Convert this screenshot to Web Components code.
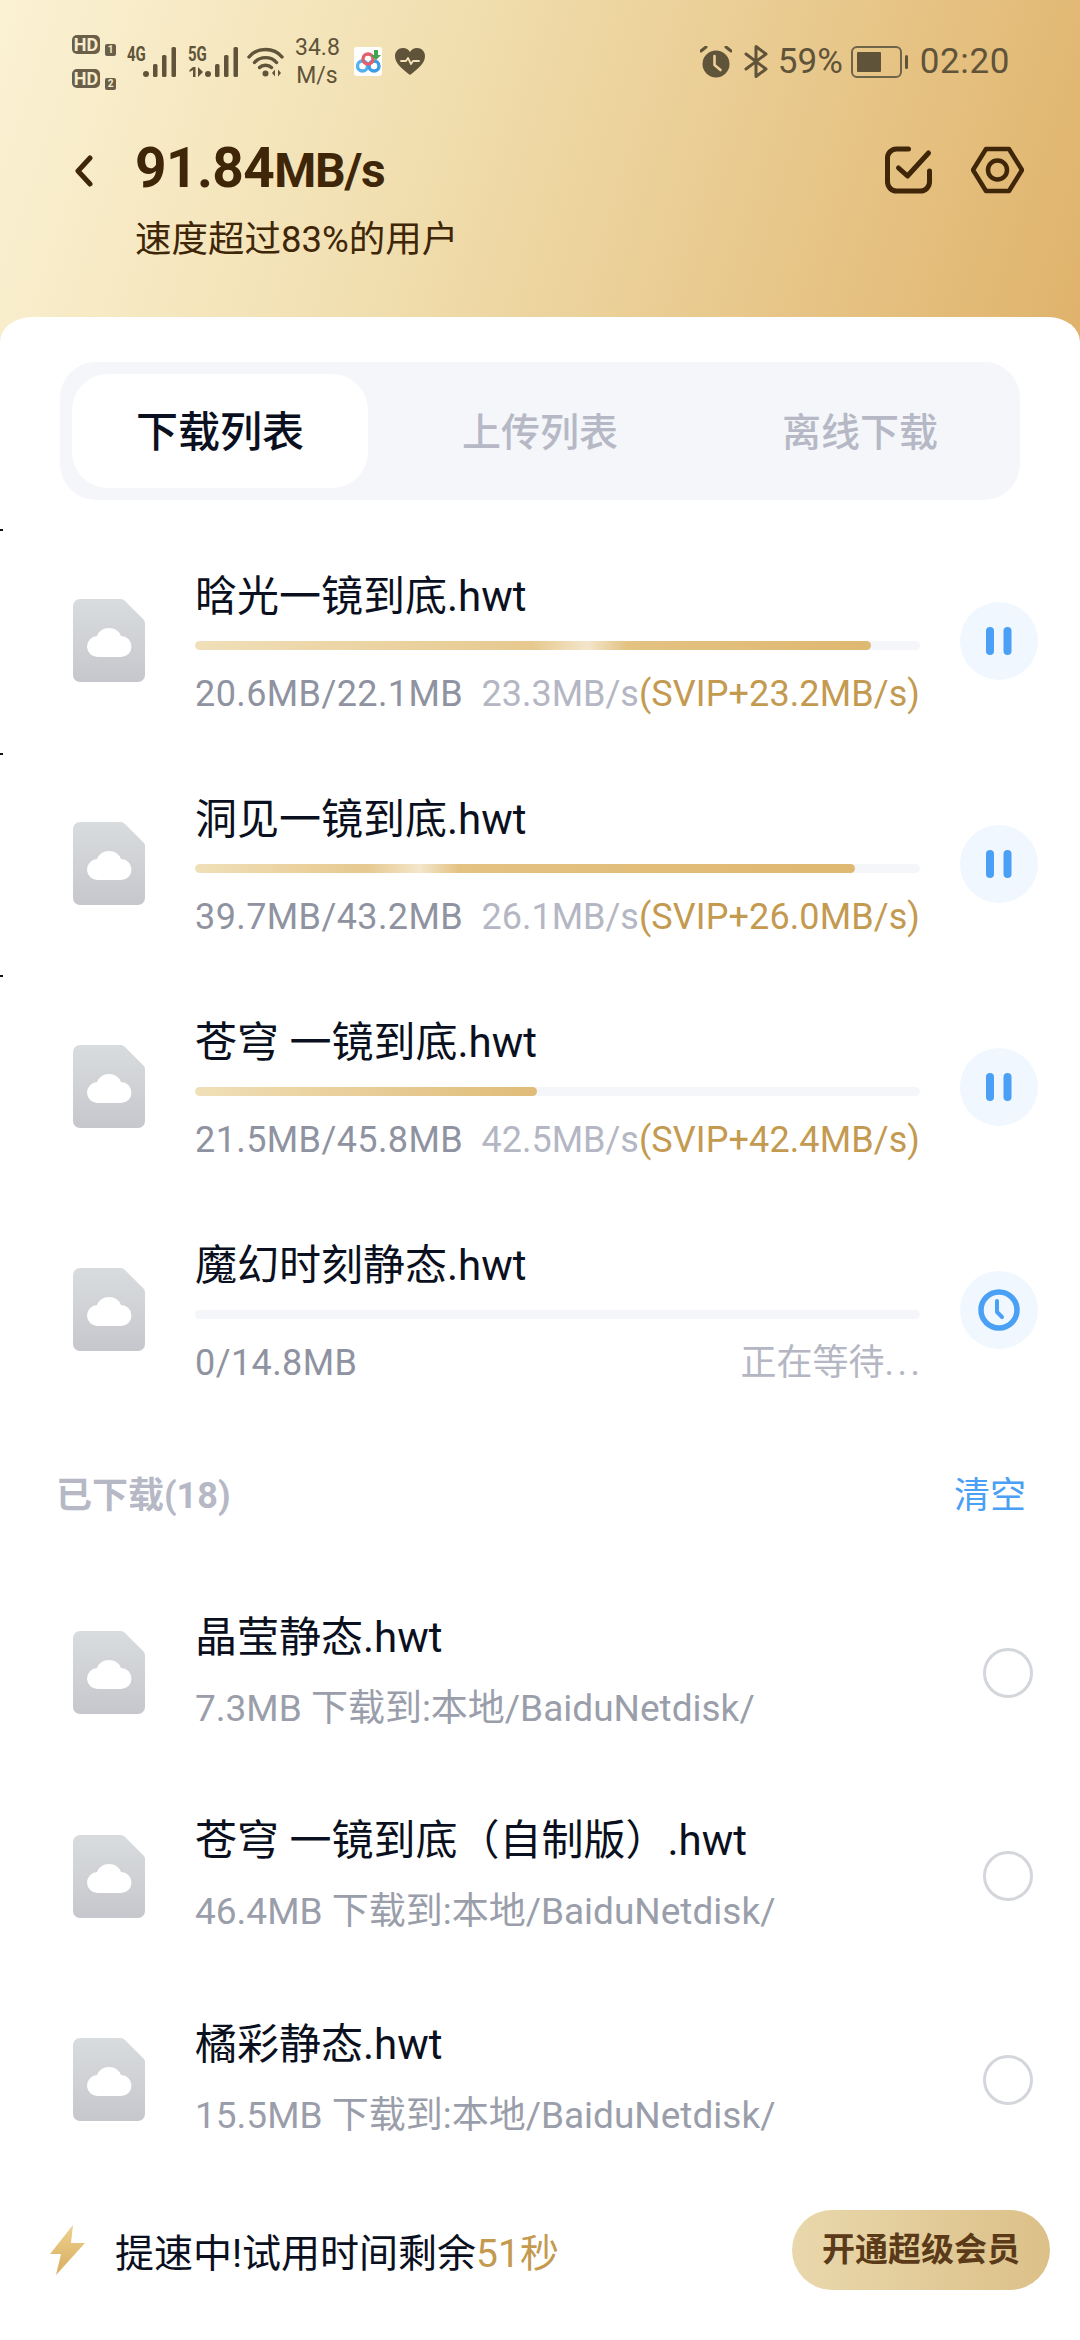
<!DOCTYPE html>
<html lang="zh">
<head>
<meta charset="utf-8">
<title>传输列表</title>
<style>
  html, body { margin: 0; padding: 0; background: #fff; }
  body { font-family: 'Roboto', 'Noto Sans CJK SC', sans-serif; }
</style>
</head>
<body>
<transfer-app>
  <status-bar slot="status"></status-bar>
  <speed-header slot="header" speed="91.84" note="速度超过83%的用户"></speed-header>
  <tab-bar>
    <tab-item active>下载列表</tab-item>
    <tab-item style="width:344px">上传列表</tab-item>
    <tab-item style="width:296px">离线下载</tab-item>
  </tab-bar>
  <transfer-row percent="93.2" shine="58" size="20.6MB/22.1MB" speed="23.3MB/s" boost="(SVIP+23.2MB/s)">晗光一镜到底.hwt</transfer-row>
  <transfer-row percent="91.1" shine="34" size="39.7MB/43.2MB" speed="26.1MB/s" boost="(SVIP+26.0MB/s)">洞见一镜到底.hwt</transfer-row>
  <transfer-row percent="47.2" size="21.5MB/45.8MB" speed="42.5MB/s" boost="(SVIP+42.4MB/s)">苍穹 一镜到底.hwt</transfer-row>
  <transfer-row percent="0" waiting size="0/14.8MB" speed="正在等待<i>...</i>">魔幻时刻静态.hwt</transfer-row>
  <section-head label="已下载(18)" action="清空"></section-head>
  <done-row info="7.3MB 下载到:本地/BaiduNetdisk/">晶莹静态.hwt</done-row>
  <done-row info="46.4MB 下载到:本地/BaiduNetdisk/">苍穹 一镜到底（自制版）.hwt</done-row>
  <done-row info="15.5MB 下载到:本地/BaiduNetdisk/">橘彩静态.hwt</done-row>
  <trial-bar seconds="51秒" cta="开通超级会员">提速中!试用时间剩余</trial-bar>
</transfer-app>

<script>
const FONT = "'Roboto', 'Noto Sans CJK SC', sans-serif";

class TransferApp extends HTMLElement {
  constructor() {
    super();
    this.attachShadow({ mode: 'open' }).innerHTML = `
      <style>
        :host {
          display: block;
          position: relative;
          width: 1080px;
          height: 2340px;
          overflow: hidden;
          font-family: ${FONT};
          background: linear-gradient(108deg, #fbf2d4 0%, #f1dfb0 38%, #e8c88c 70%, #dfb26a 100%) top / 100% 360px no-repeat, #fff;
        }
        .top { height: 317px; box-sizing: border-box; padding-top: 35px; }
        .sheet {
          background: #fff;
          border-radius: 32px 32px 0 0 / 25px 25px 0 0;
          height: 2023px;
          box-sizing: border-box;
          padding-top: 45px;
        }
        .tick { position: absolute; left: 0; width: 3px; height: 2px; background: #111; }
      </style>
      <div class="top">
        <slot name="status"></slot>
        <slot name="header"></slot>
      </div>
      <div class="sheet"><slot></slot></div>
      <i class="tick" style="top:529px"></i>
      <i class="tick" style="top:753px"></i>
      <i class="tick" style="top:975px"></i>
    `;
  }
}

class StatusBar extends HTMLElement {
  constructor() {
    super();
    this.attachShadow({ mode: 'open' }).innerHTML = `
      <style>
        :host {
          display: flex;
          align-items: center;
          height: 53px;
          padding: 0 70px 0 72px;
          color: #5f5339;
          font-family: ${FONT};
        }
        svg { display: block; flex: none; }
        .sims { display: grid; grid-template-columns: 28px 11px; gap: 15px 5px; width: 44px; }
        .hd {
          height: 19px;
          background: #6a5f48;
          color: #f7eccb;
          border-radius: 5px;
          font: 700 18px/19px ${FONT};
          text-align: center;
        }
        .sim {
          align-self: start;
          height: 12px;
          margin: 9px 0 -2px;
          background: #6a5f48;
          color: #f7eccb;
          border-radius: 2px;
          font: 700 10px/12px ${FONT};
          text-align: center;
        }
        .net { position: relative; height: 30px; flex: none; }
        .net b { position: absolute; left: 0; top: 0; font: 700 20px/14px ${FONT}; transform: scaleX(.75); transform-origin: left; }
        .net svg { position: absolute; left: 0; top: 0; }
        .rate { width: 44px; margin-left: 11px; text-align: center; font-size: 23px; line-height: 28px; white-space: nowrap; }
        .spacer { flex: 1; }
        .pct, .clock { font-size: 35px; line-height: 40px; }
        .clock { letter-spacing: .6px; }
      </style>
      <div class="sims">
        <span class="hd">HD</span><span class="sim">1</span>
        <span class="hd">HD</span><span class="sim">2</span>
      </div>
      <div class="net" style="width:49px;margin-left:11px">
        <b>4G</b>
        <svg width="49" height="30" viewBox="0 0 49 30" fill="#5f5339">
          <circle cx="19" cy="27" r="3"/>
          <rect x="26" y="17" width="4.500" height="13" rx="1.500"/>
          <rect x="35" y="8" width="4.500" height="22" rx="1.500"/>
          <rect x="44.500" y="0" width="4.500" height="30" rx="1.500"/>
        </svg>
      </div>
      <div class="net" style="width:50px;margin-left:12px">
        <b>5G</b>
        <svg width="50" height="30" viewBox="0 0 50 30" fill="#5f5339">
          <path d="M5 20h2.500v10H5v-7l-3.500 2v-2zM10 20l5 5-5 5z"/>
          <circle cx="20" cy="27" r="3"/>
          <rect x="27" y="17" width="4.500" height="13" rx="1.500"/>
          <rect x="36" y="8" width="4.500" height="22" rx="1.500"/>
          <rect x="45.500" y="0" width="4.500" height="30" rx="1.500"/>
        </svg>
      </div>
      <svg style="margin-left:9px" width="37" height="30" viewBox="0 0 37 30" fill="none" stroke="#5f5339" stroke-width="3.400" stroke-linecap="round">
        <path d="M2 10C10 0 27 0 35 10"/>
        <path d="M7.500 15.500C13 9 24 9 29.500 15.500"/>
        <path d="M12.500 20.500c3-3 9-3 12 0"/>
        <circle cx="18.500" cy="26.500" r="3" fill="#5f5339" stroke="none"/>
        <path d="M28 22.500l-3 3.500 3 3.500zM31 22.500l3 3.500-3 3.500z" fill="#5f5339" stroke="none"/>
      </svg>
      <div class="rate">34.8<br>M/s</div>
      <svg style="margin-left:15px;border-radius:3px" width="28" height="29" viewBox="0 0 28 29">
        <rect width="28" height="29" fill="#fff"/>
        <g fill="none" stroke-width="3.400">
          <circle cx="8.500" cy="19" r="5" stroke="#56b0ee"/>
          <circle cx="20" cy="19" r="5" stroke="#3f9be6"/>
          <circle cx="14" cy="12" r="5" stroke="#e0606e"/>
        </g>
        <path d="M20 3h4v5h3l-5 5-5-5h3z" fill="#3fa64f"/>
      </svg>
      <svg style="margin-left:13px" width="30" height="27" viewBox="0 0 30 27">
        <path d="M15 27C6 20 0 15 0 8 0 3.500 3.500 0 8 0c3 0 5.500 1.500 7 4 1.500-2.500 4-4 7-4 4.500 0 8 3.500 8 8 0 7-6 12-15 19z" fill="#5f5339"/>
        <path d="M6 13h5l2-3 3 6 2-3h6" fill="none" stroke="#f4e3b8" stroke-width="1.800" stroke-linecap="round" stroke-linejoin="round"/>
      </svg>
      <span class="spacer"></span>
      <svg width="32" height="32" viewBox="0 0 32 32">
        <circle cx="16" cy="18" r="13.500" fill="#5f5339"/>
        <path d="M14.500 10v9l6 5" fill="none" stroke="#ecd29a" stroke-width="2.600" stroke-linecap="round"/>
        <path d="M1 5l5-4M31 5l-5-4" stroke="#5f5339" stroke-width="3" stroke-linecap="round"/>
      </svg>
      <svg style="margin-left:12px" width="24" height="33" viewBox="0 0 24 33" fill="none" stroke="#5f5339" stroke-width="3" stroke-linecap="round" stroke-linejoin="round">
        <path d="M2 9l20 15-10 7.500V1.500L22 9 2 24"/>
      </svg>
      <span class="pct" style="margin-left:10px">59%</span>
      <svg style="margin-left:8px" width="58" height="32" viewBox="0 0 58 32">
        <rect x="1" y="1" width="49" height="30" rx="5" fill="none" stroke="#6f6349" stroke-width="2"/>
        <rect x="6" y="6" width="24" height="20" rx="1" fill="#5f5339"/>
        <rect x="54" y="9" width="3" height="14" rx="1.500" fill="#5f5339"/>
      </svg>
      <span class="clock" style="margin-left:11px">02:20</span>
    `;
  }
}

class SpeedHeader extends HTMLElement {
  constructor() {
    super();
    const speed = this.getAttribute('speed');
    const note = this.getAttribute('note');
    this.attachShadow({ mode: 'open' }).innerHTML = `
      <style>
        :host {
          display: grid;
          grid-template-columns: 60px 1fr auto;
          padding: 49px 56px 0 75px;
          color: #3f2609;
          font-family: ${FONT};
        }
        .back { align-self: center; display: block; margin-top: 2px; }
        .speed { font-weight: 700; font-size: 55px; line-height: 62px; letter-spacing: -.6px; white-space: nowrap; }
        .speed small { font-size: 48px; font-weight: 700; letter-spacing: -1.200px; }
        .actions { display: flex; gap: 38px; align-items: center; }
        .note { grid-column: 2 / 4; font-size: 36.500px; line-height: 46px; margin-top: 15px; }
        svg { display: block; }
      </style>
      <svg class="back" width="18" height="32" viewBox="0 0 18 32" fill="none" stroke="#3f2609" stroke-width="5" stroke-linecap="round" stroke-linejoin="round"><path d="M15 3L3 16l12 13"/></svg>
      <div class="speed">${speed}<small>MB/s</small></div>
      <div class="actions">
        <svg width="49" height="48" viewBox="0 0 48 48" fill="none" stroke="#3f2609" stroke-width="5" stroke-linecap="round" stroke-linejoin="round">
          <path d="M24 3H12a9 9 0 0 0-9 9v24a9 9 0 0 0 9 9h24a9 9 0 0 0 9-9V25"/>
          <path d="M14 22l9 8 21-23"/>
        </svg>
        <svg width="53" height="48" viewBox="0 0 53 48" fill="none" stroke="#3f2609" stroke-width="4.500" stroke-linejoin="round">
          <path d="M15 3h23l13 21-13 21H15L2 24z"/>
          <circle cx="26.500" cy="24" r="9.500"/>
        </svg>
      </div>
      <div class="note">${note}</div>
    `;
  }
}

class TabBar extends HTMLElement {
  constructor() {
    super();
    this.attachShadow({ mode: 'open' }).innerHTML = `
      <style>
        :host {
          display: flex;
          box-sizing: border-box;
          width: 960px;
          height: 138px;
          margin: 0 0 29px 60px;
          padding: 12px;
          background: #f4f6fa;
          border-radius: 36px;
        }
      </style>
      <slot></slot>
    `;
  }
}

class TabItem extends HTMLElement {
  constructor() {
    super();
    this.attachShadow({ mode: 'open' }).innerHTML = `
      <style>
        :host {
          display: flex;
          flex: none;
          box-sizing: border-box;
          align-items: center;
          justify-content: center;
          padding-bottom: 5px;
          color: #b6b9c5;
          font-size: 39px;
          font-weight: 500;
        }
        :host([active]) {
          width: 296px;
          background: #fff;
          border-radius: 36px;
          color: #0b1020;
          font-size: 42px;
        }
      </style>
      <slot></slot>
    `;
  }
}

class FileIcon extends HTMLElement {
  constructor() {
    super();
    this.attachShadow({ mode: 'open' }).innerHTML = `
      <style>
        :host { display: block; width: 72px; height: 83px; }
        svg { display: block; }
      </style>
      <svg width="72" height="83" viewBox="0 0 72 83">
        <defs>
          <linearGradient id="g" x1="0" y1="0" x2="0" y2="1">
            <stop offset="0" stop-color="#d9dcdf"/>
            <stop offset="1" stop-color="#c6c7cc"/>
          </linearGradient>
        </defs>
        <path d="M7 0h41a5 5 0 0 1 3.500 1.500L70.500 20.500A5 5 0 0 1 72 24v52a7 7 0 0 1-7 7H7a7 7 0 0 1-7-7V7a7 7 0 0 1 7-7z" fill="url(#g)"/>
        <path d="M25 58a10.500 10.500 0 0 1-1-21A13 13 0 0 1 48 37a10.500 10.500 0 0 1 0 21z" fill="#fff"/>
      </svg>
    `;
  }
}

class TransferRow extends HTMLElement {
  constructor() {
    super();
    const percent = this.getAttribute('percent');
    const waiting = this.hasAttribute('waiting');
    const boost = this.getAttribute('boost');
    const shine = this.getAttribute('shine');
    const gradient = shine
      ? `linear-gradient(90deg, #f0dfb8 0%, #e7c98f ${shine - 8}%, #f3e6cb ${shine}%, #e4c282 ${+shine + 6}%, #dfb871 100%)`
      : 'linear-gradient(90deg, #f0dfb8, #e0bc78)';
    const glyph = waiting
      ? `<svg width="42" height="42" viewBox="0 0 42 42" fill="none" stroke="#4aa0f4"><circle cx="21" cy="21" r="18" stroke-width="5.500"/><path d="M19 12v11l5 5" stroke-width="4" stroke-linecap="round" stroke-linejoin="round"/></svg>`
      : `<svg width="26" height="28" viewBox="0 0 26 28" fill="#4aa0f4"><rect x="0" width="8" height="28" rx="4"/><rect x="17.500" width="8" height="28" rx="4"/></svg>`;
    this.attachShadow({ mode: 'open' }).innerHTML = `
      <style>
        :host {
          display: grid;
          grid-template-columns: 122px 725px 1fr;
          box-sizing: border-box;
          height: 223px;
          padding: 40px 0 0 73px;
          font-family: ${FONT};
        }
        file-icon { margin-top: 30px; }
        .title { padding-top: 2px; color: #0b1020; font-size: 42px; line-height: 52px; white-space: nowrap; }
        .track { height: 9px; margin-top: 18px; background: #f4f6fa; border-radius: 5px; overflow: hidden; }
        .fill { height: 100%; border-radius: 5px; background: ${gradient}; }
        .meta { display: flex; margin-top: 19px; font-size: 36px; line-height: 50px; white-space: nowrap; color: #8f93a1; }
        .size { letter-spacing: .4px; }
        .speed { margin-left: auto; color: #b4b7c3; }
        .speed i { font-style: normal; letter-spacing: 3.500px; margin-right: -3.500px; }
        .boost { color: #c39a50; letter-spacing: .1px; }
        .action {
          display: flex;
          align-items: center;
          justify-content: center;
          width: 78px;
          height: 78px;
          margin: 33px 0 0 40px;
          background: #f0f7fe;
          border-radius: 50%;
        }
      </style>
      <file-icon></file-icon>
      <div>
        <div class="title"><slot></slot></div>
        <div class="track"><div class="fill" style="width:${percent}%"></div></div>
        <div class="meta">
          <span class="size">${this.getAttribute('size')}</span>
          <span class="speed">${this.getAttribute('speed')}</span>${boost ? `<span class="boost">${boost}</span>` : ''}
        </div>
      </div>
      <div class="action">${glyph}</div>
    `;
  }
}

class SectionHead extends HTMLElement {
  constructor() {
    super();
    this.attachShadow({ mode: 'open' }).innerHTML = `
      <style>
        :host {
          display: flex;
          justify-content: space-between;
          align-items: center;
          height: 60px;
          margin: 41px 0 49px;
          padding: 0 54px 0 56px;
          font-size: 36px;
        }
        .label { color: #b6b9c5; font-weight: 700; }
        .action { color: #4aa0f4; }
      </style>
      <span class="label">${this.getAttribute('label')}</span>
      <span class="action">${this.getAttribute('action')}</span>
    `;
  }
}

class DoneRow extends HTMLElement {
  constructor() {
    super();
    this.attachShadow({ mode: 'open' }).innerHTML = `
      <style>
        :host {
          display: grid;
          grid-template-columns: 122px 1fr 50px;
          align-items: center;
          box-sizing: border-box;
          height: 203.500px;
          padding: 0 47px 0 73px;
          font-family: ${FONT};
        }
        .title { color: #0b1020; font-size: 42px; line-height: 52px; white-space: nowrap; }
        .info { color: #9a9eaa; font-size: 37px; line-height: 50px; margin-top: 20px; white-space: nowrap; }
        .radio { box-sizing: border-box; width: 50px; height: 50px; border: 3px solid #d3d6db; border-radius: 50%; }
      </style>
      <file-icon></file-icon>
      <div>
        <div class="title"><slot></slot></div>
        <div class="info">${this.getAttribute('info')}</div>
      </div>
      <div class="radio"></div>
    `;
  }
}

class TrialBar extends HTMLElement {
  constructor() {
    super();
    this.attachShadow({ mode: 'open' }).innerHTML = `
      <style>
        :host {
          display: flex;
          align-items: center;
          height: 80px;
          margin-top: 28px;
          padding: 0 30px 0 50px;
          font-family: ${FONT};
        }
        .text { margin-left: 30px; color: #0b1020; font-size: 39px; white-space: nowrap; }
        .text b { color: #c39a50; font-weight: 400; }
        .cta {
          margin-left: auto;
          width: 258px;
          height: 80px;
          border-radius: 40px;
          background: linear-gradient(90deg, #e9d8ac, #dcc088);
          color: #5a3a18;
          font-size: 33px;
          font-weight: 700;
          line-height: 80px;
          text-align: center;
        }
        svg { display: block; flex: none; }
      </style>
      <svg width="35" height="50" viewBox="0 0 35 50">
        <defs>
          <linearGradient id="b" x1="0" y1="0" x2="0" y2="1">
            <stop offset="0" stop-color="#ecd08f"/>
            <stop offset="1" stop-color="#d9ae60"/>
          </linearGradient>
        </defs>
        <path d="M23 0L0 29h11l-5 21 29-32H21z" fill="url(#b)"/>
      </svg>
      <span class="text"><slot></slot><b>${this.getAttribute('seconds')}</b></span>
      <span class="cta">${this.getAttribute('cta')}</span>
    `;
  }
}

customElements.define('transfer-app', TransferApp);
customElements.define('status-bar', StatusBar);
customElements.define('speed-header', SpeedHeader);
customElements.define('tab-bar', TabBar);
customElements.define('tab-item', TabItem);
customElements.define('file-icon', FileIcon);
customElements.define('transfer-row', TransferRow);
customElements.define('section-head', SectionHead);
customElements.define('done-row', DoneRow);
customElements.define('trial-bar', TrialBar);
</script>
</body>
</html>
